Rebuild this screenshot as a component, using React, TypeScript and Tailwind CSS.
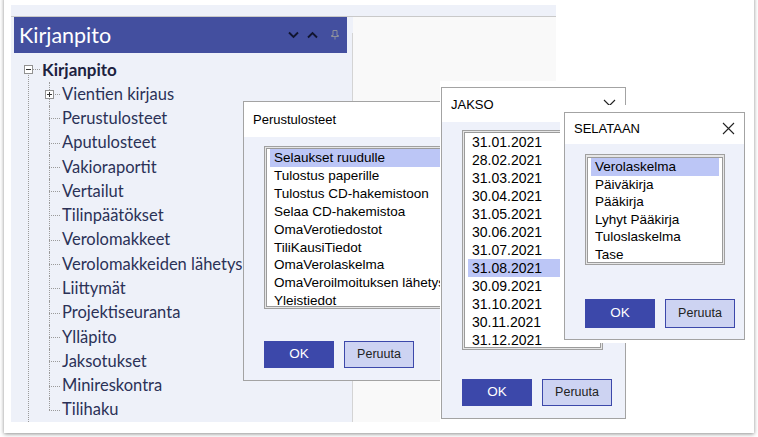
import { ReactNode } from 'react';

const treeItems = [
  'Vientien kirjaus',
  'Perustulosteet',
  'Aputulosteet',
  'Vakioraportit',
  'Vertailut',
  'Tilinpäätökset',
  'Verolomakkeet',
  'Verolomakkeiden lähetys',
  'Liittymät',
  'Projektiseuranta',
  'Ylläpito',
  'Jaksotukset',
  'Minireskontra',
  'Tilihaku',
];

const reports = [
  'Selaukset ruudulle',
  'Tulostus paperille',
  'Tulostus CD-hakemistoon',
  'Selaa CD-hakemistoa',
  'OmaVerotiedostot',
  'TiliKausiTiedot',
  'OmaVerolaskelma',
  'OmaVeroilmoituksen lähetys',
  'Yleistiedot',
];

const dates = [
  '31.01.2021',
  '28.02.2021',
  '31.03.2021',
  '30.04.2021',
  '31.05.2021',
  '30.06.2021',
  '31.07.2021',
  '31.08.2021',
  '30.09.2021',
  '31.10.2021',
  '30.11.2021',
  '31.12.2021',
];

const views = ['Verolaskelma', 'Päiväkirja', 'Pääkirja', 'Lyhyt Pääkirja', 'Tuloslaskelma', 'Tase'];

function CloseX() {
  return (
    <svg width="13" height="13" viewBox="0 0 13 13" className="text-[#222]">
      <path d="M1 1 L12 12 M12 1 L1 12" stroke="currentColor" strokeWidth="1.1" fill="none" />
    </svg>
  );
}

function ListBox({
  items,
  selected,
  className,
  rowClass,
}: {
  items: string[];
  selected: number;
  className: string;
  rowClass: string;
}) {
  return (
    <div className={`border border-[#a0a0a0] bg-[#e6e6e6] p-px ${className}`}>
      <div className="h-full overflow-hidden border border-[#9b9b9b] bg-white px-[3px]">
        {items.map((it, i) => (
          <div
            key={it}
            className={`whitespace-nowrap pl-[4px] ${rowClass} ${i === selected ? 'bg-[#bcc6f6]' : ''}`}
          >
            {it}
          </div>
        ))}
      </div>
    </div>
  );
}

function Buttons({ className }: { className: string }) {
  return (
    <div className={`flex gap-[10px] ${className}`}>
      <div className="flex w-[70px] items-center justify-center bg-[#3c48aa] text-[13.5px] text-white">OK</div>
      <div className="flex w-[70px] items-center justify-center border border-[#3c48aa] bg-[#cdd3f2] text-[12.5px] text-[#222]">
        Peruuta
      </div>
    </div>
  );
}

function Dialog({
  title,
  close,
  titleClass,
  className,
  children,
}: {
  title: string;
  close?: boolean;
  titleClass: string;
  className: string;
  children: ReactNode;
}) {
  return (
    <div className={`border border-[#a3a3a3] bg-[#eef1fa] font-['Liberation_Sans',Arial,sans-serif] text-black ${className}`}>
      <div className={`flex items-center justify-between bg-white pl-[9px] pr-[9px] text-[13px] ${titleClass}`}>
        <span>{title}</span>
        {close && <CloseX />}
      </div>
      {children}
    </div>
  );
}

function TreeRow({ label, last, plus }: { label: string; last: boolean; plus: boolean }) {
  return (
    <div className="flex h-[24.3px] items-center">
      <div className="relative ml-[25px] h-full w-[11px]">
        <div
          className={`absolute left-0 top-0 border-l border-dotted border-[#9a9a9a] ${last ? 'h-1/2' : 'h-full'}`}
        />
        <div className="absolute left-0 top-1/2 w-full border-t border-dotted border-[#9a9a9a]" />
        {plus && (
          <div className="absolute left-[-4px] top-[calc(50%-4px)] flex h-[9px] w-[9px] items-center justify-center border border-[#919191] bg-white">
            <svg width="7" height="7" viewBox="0 0 7 7">
              <path d="M1 3.5 H6 M3.5 1 V6" stroke="#333" strokeWidth="1" />
            </svg>
          </div>
        )}
      </div>
      <span className="ml-[2px] whitespace-nowrap">{label}</span>
    </div>
  );
}

export default function App() {
  return (
    <div className="relative h-[437px] w-[758px] overflow-hidden bg-white">
      <div className="ml-[4px] mt-[-4px] h-[437px] w-[750px] bg-white px-[7px] pt-[9px] shadow-[0_1px_4px_rgba(0,0,0,0.45)]">
        <div className="flex h-[417px] w-[545px] flex-col">
          <div className="h-[12px] border-b border-[#c9c9c9] bg-[#eef1f9]" />
          <div className="flex min-h-0 flex-1">
            <div className="flex w-[336px] flex-col bg-[#eef1f9] pl-[3px]">
              <div className="flex h-[36px] items-center bg-[#434f9f] pl-[5px] pr-[8px]">
                <span className="flex-1 font-['Lato',sans-serif] text-[21.5px] text-white">Kirjanpito</span>
                <svg width="11" height="8" viewBox="0 0 11 8" className="mr-[8px]">
                  <path d="M1 1.5 L5.5 6 L10 1.5" stroke="#111530" strokeWidth="1.9" fill="none" />
                </svg>
                <svg width="11" height="8" viewBox="0 0 11 8" className="mr-[13px]">
                  <path d="M1 6.5 L5.5 2 L10 6.5" stroke="#111530" strokeWidth="1.9" fill="none" />
                </svg>
                <svg width="8" height="10" viewBox="0 0 8 10">
                  <path d="M2 0.5 H6 V5.5 H7.5 V6.5 H0.5 V5.5 H2 Z M4 6.5 V9.5" stroke="#8d909c" strokeWidth="1" fill="none" />
                </svg>
              </div>
              <div className="relative flex-1 pt-[5px] pl-[10px] font-['Lato',sans-serif] text-[16.5px] text-[#2b3157]">
                <div className="absolute bottom-0 left-[14px] top-[22px] border-l border-dotted border-[#9a9a9a]" />
                <div className="flex h-[24.3px] items-center">
                  <div className="flex h-[9px] w-[9px] items-center justify-center border border-[#919191] bg-white">
                    <svg width="7" height="7" viewBox="0 0 7 7">
                      <path d="M1 3.5 H6" stroke="#333" strokeWidth="1" />
                    </svg>
                  </div>
                  <div className="w-[7px] border-t border-dotted border-[#9a9a9a]" />
                  <span className="ml-[2px] text-[17px] font-bold text-[#1d2240]">Kirjanpito</span>
                </div>
                {treeItems.map((t, i) => (
                  <TreeRow key={t} label={t} last={i === treeItems.length - 1} plus={i === 0} />
                ))}
              </div>
            </div>
            <div className="w-[6px] bg-[#eef1f9] pt-[16px]">
              <div className="ml-[5px] h-full w-px bg-[#d4d4d4]" />
            </div>
            <div className="flex-1 bg-[#f9f9f9]" />
          </div>
        </div>
      </div>

      <Dialog title="Perustulosteet" titleClass="h-[35px]" className="absolute left-[243px] top-[101px] w-[214px]">
        <ListBox
          items={reports}
          selected={0}
          className="ml-[20px] mt-[9px] h-[163px] text-[13.5px]"
          rowClass="leading-[17.9px]"
        />
        <Buttons className="ml-[20px] mt-[32px] mb-[12px] h-[27px]" />
      </Dialog>

      <div className="absolute left-[440px] top-[81px] bg-white pb-[3px] pl-px pr-[4px] pt-[6px]">
        <Dialog title="JAKSO" close titleClass="h-[34px]" className="w-[185px]">
          <ListBox
            items={dates}
            selected={7}
            className="ml-[20px] mt-[8px] h-[220px] w-[141px] text-[14px]"
            rowClass="leading-[18px]"
          />
          <Buttons className="ml-[20px] mt-[29px] mb-[12px] h-[27px]" />
        </Dialog>
      </div>

      <div className="absolute left-[560px] top-[105px] bg-white pb-[3px] pl-[4px] pr-[3px] pt-[7px]">
        <Dialog title="SELATAAN" close titleClass="h-[31px]" className="w-[181px]">
          <ListBox
            items={views}
            selected={0}
            className="ml-[20px] mt-[10px] h-[111px] w-[140px] pt-[2px] text-[13.5px]"
            rowClass="leading-[17.6px]"
          />
          <Buttons className="ml-[20px] mt-[34px] mb-[11px] h-[29px]" />
        </Dialog>
      </div>
    </div>
  );
}
